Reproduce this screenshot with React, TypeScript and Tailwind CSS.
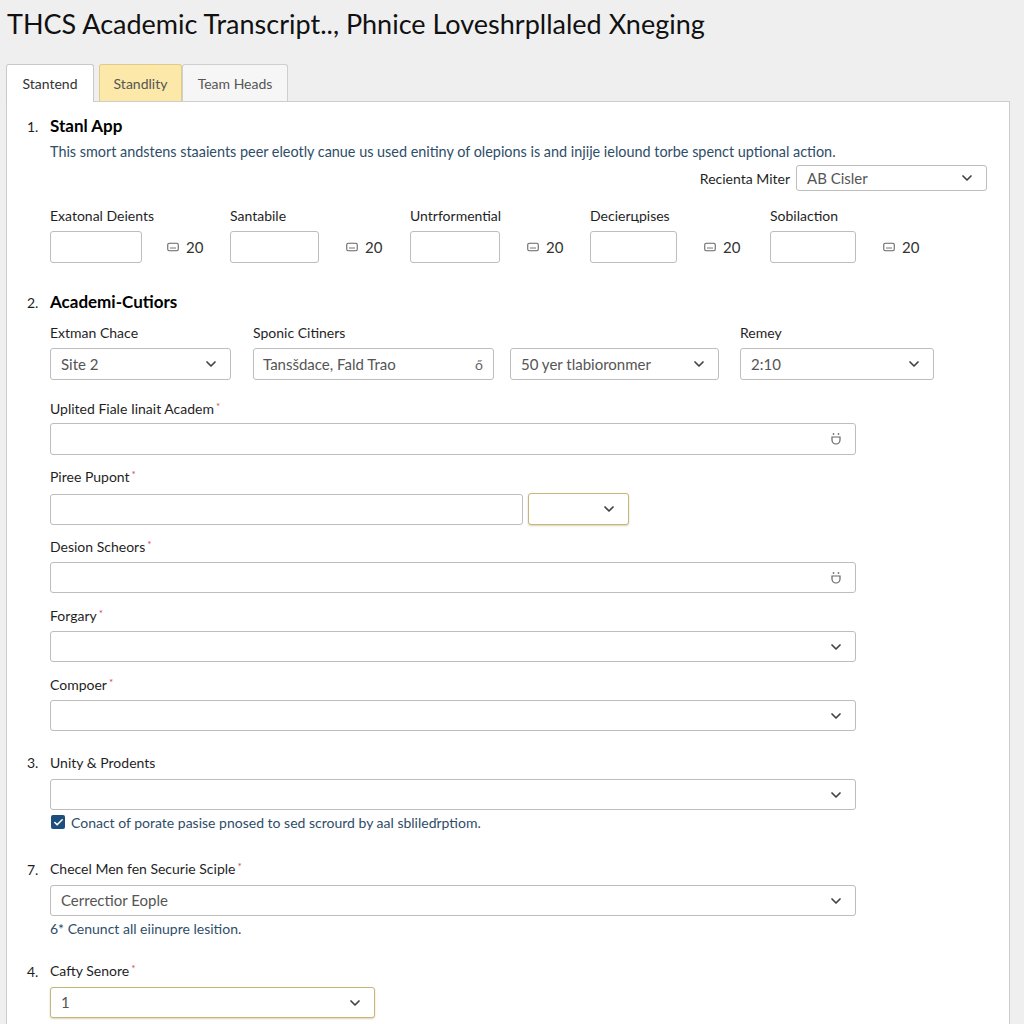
import { ChevronDown, Check } from "lucide-react";

const font = { fontFamily: "Lato, 'Open Sans', Arial, sans-serif" };

function KeyIcon() {
  return (
    <svg width="12" height="10" viewBox="0 0 12 10" className="shrink-0">
      <rect x="0.75" y="1.25" width="10.5" height="7.5" rx="1.5" fill="none" stroke="#666" strokeWidth="1.1" />
      <line x1="3" y1="6" x2="9" y2="6" stroke="#777" strokeWidth="1" />
    </svg>
  );
}

function ClearIcon() {
  return (
    <svg width="12" height="14" viewBox="0 0 12 14" className="shrink-0">
      <circle cx="3.5" cy="2" r="0.9" fill="#777" />
      <circle cx="8.5" cy="2" r="0.9" fill="#777" />
      <path d="M2 5 v3 a4 4 0 0 0 8 0 v-3 Z" fill="none" stroke="#666" strokeWidth="1.2" />
    </svg>
  );
}

function Select({
  value,
  className = "",
  h = "h-[32px]",
  highlight = false,
}: {
  value?: string;
  className?: string;
  h?: string;
  highlight?: boolean;
}) {
  const border = highlight
    ? "border-[#c7b677] shadow-[0_1px_2px_rgba(150,130,60,0.35)]"
    : "border-[#bdbdbd]";
  return (
    <div
      className={`flex items-center justify-between rounded-[3px] border bg-white pl-[10px] pr-[11px] ${border} ${h} ${className}`}
    >
      <span className="text-[15px] text-[#555]">{value}</span>
      <ChevronDown size={16} strokeWidth={2.6} className="text-[#444]" />
    </div>
  );
}

function TextBox({ className = "", icon = false, h = "h-[32px]" }: { className?: string; icon?: boolean; h?: string }) {
  return (
    <div className={`flex items-center justify-end rounded-[3px] border border-[#bdbdbd] bg-white pr-[13px] ${h} ${className}`}>
      {icon && <ClearIcon />}
    </div>
  );
}

function Req() {
  return <span className="relative -top-[4px] ml-[2px] text-[10px] text-[#d0485a]">*</span>;
}

function Label({ children, req = false, className = "" }: { children: React.ReactNode; req?: boolean; className?: string }) {
  return (
    <div className={`h-[20px] text-[14px] leading-[20px] text-[#1f1f1f] ${className}`}>
      {children}
      {req && <Req />}
    </div>
  );
}

function Numbered({ n, children, bold = false, className = "" }: { n: string; children: React.ReactNode; bold?: boolean; className?: string }) {
  return (
    <div className={`flex items-center ${className}`}>
      <span className="w-[23px] text-[14px] text-[#1f1f1f]">{n}</span>
      {bold ? (
        <span className="text-[17px] font-bold leading-[24px] text-black">{children}</span>
      ) : (
        <span className="text-[14px] leading-[20px] text-[#1f1f1f]">{children}</span>
      )}
    </div>
  );
}

const smallFields = ["Exatonal Deients", "Santabile", "Untrformential", "Decierцpises", "Sobilaction"];
const smallWidths = ["w-[92px]", "w-[89px]", "w-[90px]", "w-[87px]", "w-[86px]"];

export default function App() {
  return (
    <div style={font} className="min-h-[1024px] bg-[#efefef] pt-[8px]">
      <h1 className="pl-[7px] text-[27px] leading-[32px] text-[#111]">
        THCS Academic Transcript.., Phnice Loveshrpllaled Xneging
      </h1>

      <div className="mt-[24px] ml-[6px] flex items-end">
        <div className="relative z-10 -mb-px flex h-[38px] w-[88px] items-center justify-center rounded-t-[3px] border border-b-0 border-[#c9c9c9] bg-white text-[14px] text-[#333]">
          Stantend
        </div>
        <div className="ml-[5px] flex h-[37px] w-[83px] items-center justify-center rounded-t-[3px] border border-b-0 border-[#e0cc88] bg-[#fce8a8] text-[14px] text-[#555]">
          Standlity
        </div>
        <div className="flex h-[37px] w-[106px] items-center justify-center rounded-t-[3px] border border-b-0 border-[#cfcfcf] bg-[#f6f6f6] text-[14px] text-[#555]">
          Team Heads
        </div>
      </div>

      <div className="ml-[6px] w-[1004px] border border-[#cdcdcd] bg-white pb-[10px] pl-[20px] pr-[22px] pt-[12px]">
        <Numbered n="1." bold>Stanl App</Numbered>
        <div className="ml-[23px] mt-[4px] text-[14.4px] leading-[20px] text-[#2e4d68]">
          This smort andstens staaients peer eleotly canue us used enitiny of olepions is and injije ielound torbe spenct uptional action.
        </div>
        <div className="mt-[3px] flex items-center justify-end">
          <span className="mr-[6px] text-[14px] text-[#1f1f1f]">Recienta Miter</span>
          <Select value="AB Cisler" className="w-[191px]" h="h-[26px]" />
        </div>

        <div className="ml-[23px] mt-[15px] grid grid-cols-[180px_180px_180px_180px_180px]">
          {smallFields.map((f, i) => (
            <div key={f}>
              <Label>{f}</Label>
              <div className="mt-[5px] flex items-center">
                <div className={`h-[32px] rounded-[3px] border border-[#bdbdbd] bg-white ${smallWidths[i]}`} />
                <div className={`flex items-center gap-[7px] ${i === 0 ? "ml-[25px]" : "ml-[27px]"}`}>
                  <KeyIcon />
                  <span className="text-[15px] text-[#333]">20</span>
                </div>
              </div>
            </div>
          ))}
        </div>

        <Numbered n="2." bold className="mt-[27px]">Academi-Cutiors</Numbered>
        <div className="ml-[23px] mt-[9px] flex items-end">
          <div className="w-[181px]">
            <Label>Extman Chace</Label>
            <Select value="Site 2" className="mt-[5px]" />
          </div>
          <div className="ml-[22px] w-[241px]">
            <Label>Sponic Citiners</Label>
            <div className="mt-[5px] flex h-[32px] items-center justify-between rounded-[3px] border border-[#bdbdbd] bg-white pl-[9px] pr-[10px]">
              <span className="text-[15px] text-[#555]">Tansšdace, Fald Trao</span>
              <span className="text-[14px] text-[#666]">ő</span>
            </div>
          </div>
          <div className="ml-[16px] w-[209px]">
            <Select value="50 yer tlabioronmer" />
          </div>
          <div className="ml-[21px] w-[194px]">
            <Label>Remey</Label>
            <Select value="2:10" className="mt-[5px]" />
          </div>
        </div>

        <div className="ml-[23px] w-[806px]">
          <Label req className="mt-[19px]">Uplited Fiale Iinait Academ</Label>
          <TextBox icon className="mt-[4px]" />

          <Label req className="mt-[12px]">Piree Pupont</Label>
          <div className="mt-[6px] flex items-center">
            <TextBox className="w-[473px]" h="h-[31px]" />
            <Select className="ml-[5px] w-[101px]" h="h-[32px]" highlight />
          </div>

          <Label req className="mt-[12px]">Desion Scheors</Label>
          <TextBox icon className="mt-[5px]" h="h-[31px]" />

          <Label req className="mt-[13px]">Forgary</Label>
          <Select className="mt-[5px]" h="h-[31px]" />

          <Label req className="mt-[13px]">Compoer</Label>
          <Select className="mt-[5px]" h="h-[31px]" />
        </div>

        <Numbered n="3." className="mt-[21px]">Unity &amp; Prodents</Numbered>
        <div className="ml-[23px] w-[806px]">
          <Select className="mt-[6px]" h="h-[31px]" />
          <div className="mt-[2px] flex h-[20px] items-center">
            <span className="ml-[1px] flex h-[14px] w-[14px] items-center justify-center rounded-[2px] bg-[#1d4f7c]">
              <Check size={11} strokeWidth={3.5} className="text-white" />
            </span>
            <span className="ml-[6px] text-[14px] text-[#2e4d68]">
              Conact of porate pasise pnosed to sed scrourd by aal sblileďrptiom.
            </span>
          </div>
        </div>

        <Numbered n="7." className="mt-[27px]">
          Checel Men fen Securie Sciple<Req />
        </Numbered>
        <div className="ml-[23px] w-[806px]">
          <Select value="Cerrectior Eople" className="mt-[5px]" h="h-[31px]" />
          <div className="mt-[3px] text-[14px] leading-[20px] text-[#2e4d68]">6* Cenunct all eiinupre lesition.</div>
        </div>

        <Numbered n="4." className="mt-[22px]">
          Cafty Senore<Req />
        </Numbered>
        <div className="ml-[23px] w-[325px]">
          <Select value="1" className="mt-[5px]" h="h-[31px]" highlight />
        </div>
      </div>
    </div>
  );
}
